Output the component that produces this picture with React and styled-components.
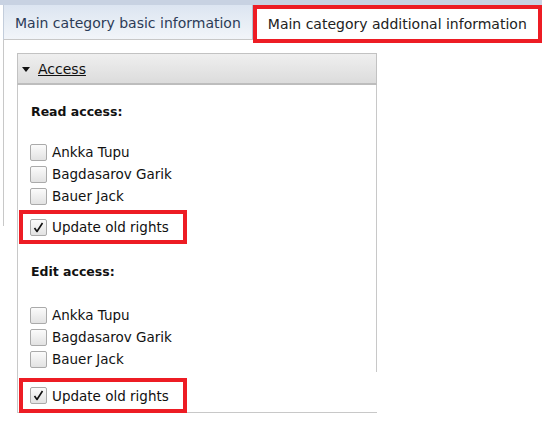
import React from "react";
import styled, { createGlobalStyle } from "styled-components";

const Global = createGlobalStyle`
  html, body { margin: 0; padding: 0; background: #ffffff; }
  body { font-family: "DejaVu Sans", Verdana, sans-serif; color: #1a1a1a; }
`;

const Page = styled.div`
  width: 542px;
  height: 421px;
  overflow: hidden;
  background: #fff;
`;

const TopBand = styled.div`
  height: 5px;
  background: #c8d2e2;
`;

const TabBar = styled.div`
  display: flex;
  align-items: flex-start;
  padding-left: 3px;
`;

const Tab = styled.div`
  box-sizing: border-box;
  display: flex;
  align-items: center;
  font-size: 14px;
  white-space: nowrap;
  ${(p) =>
    p.$active
      ? `
    height: 38px;
    margin-left: 0;
    padding: 0 11px 0 11px;
    background: #fff;
    color: #222;
    border: 4px solid #ed1c24;
  `
      : `
    height: 35px;
    padding: 1px 11px 0 11px;
    background: linear-gradient(#dce5f1, #f2f5f9);
    color: #2c3b57;
    border-left: 1px solid #c3cddb;
    border-right: 1px solid #b4bfce;
    border-bottom: 1px solid #c8c8c8;
  `}
`;

const TabContent = styled.div`
  margin-left: 3px;
  margin-top: -4px;
  height: 173px;
  border-left: 1px solid #c8c8c8;
  padding: 14px 0 0 13px;
`;

const Panel = styled.div`
  width: 360px;
`;

const PanelHeader = styled.div`
  box-sizing: border-box;
  height: 32px;
  display: flex;
  align-items: center;
  gap: 8px;
  padding-left: 4px;
  border: 1px solid #c2c2c2;
  border-bottom: 2px solid #bdbdbd;
  background: linear-gradient(#efefef, #dcdcdc);
  font-size: 14px;
  color: #111;
`;

const Caret = styled.span`
  width: 0;
  height: 0;
  margin-top: 1px;
  border-left: 4px solid transparent;
  border-right: 4px solid transparent;
  border-top: 5px solid #111;
`;

const HeaderLink = styled.span`
  text-decoration: underline;
`;

const PanelBody = styled.div`
  box-sizing: border-box;
  height: 328px;
  border-left: 1px solid #c8c8c8;
  border-bottom: 1px solid #c8c8c8;
  background: linear-gradient(#c8c8c8, #c8c8c8) right top / 1px 287px no-repeat;
  padding: 16px 0 0 0;
`;

const SectionTitle = styled.div`
  font-weight: bold;
  font-size: 12.5px;
  line-height: 16px;
  padding-left: 13px;
  margin-top: ${(p) => p.$mt}px;
  margin-bottom: ${(p) => p.$mb}px;
  color: #111;
`;

const Row = styled.label`
  display: flex;
  align-items: center;
  gap: 5px;
  height: 22px;
  padding-left: 12px;
  font-size: 13.5px;
  color: #111;
`;

const Highlight = styled.div`
  box-sizing: border-box;
  width: 168px;
  height: ${(p) => p.$h}px;
  margin-left: 1px;
  margin-top: ${(p) => p.$mt}px;
  border: 4px solid #ed1c24;
  display: flex;
  align-items: center;
  ${Row} {
    padding-left: 7px;
  }
`;

const Box = styled.span`
  box-sizing: border-box;
  width: 17px;
  height: 17px;
  border: 1px solid #aaaaaa;
  border-radius: 2px;
  background: linear-gradient(#fbfbfb, #e2e2e2);
  display: flex;
  align-items: center;
  justify-content: center;
  flex: none;
`;

function Check({ checked }) {
  return (
    <Box>
      {checked && (
        <svg width="11" height="11" viewBox="0 0 11 11">
          <path d="M1.5 6 L4 9.5 L9.5 1" fill="none" stroke="#111" strokeWidth="1.6" strokeLinejoin="round" />
        </svg>
      )}
    </Box>
  );
}

const users = ["Ankka Tupu", "Bagdasarov Garik", "Bauer Jack"];

function Section({ title, titleMt, titleMb, hlMt, hlH }) {
  return (
    <>
      <SectionTitle $mt={titleMt} $mb={titleMb}>{title}</SectionTitle>
      {users.map((u) => (
        <Row key={u}>
          <Check />
          {u}
        </Row>
      ))}
      <Highlight $mt={hlMt} $h={hlH}>
        <Row>
          <Check checked />
          Update old rights
        </Row>
      </Highlight>
    </>
  );
}

export default function App() {
  return (
    <Page>
      <Global />
      <TopBand />
      <TabBar>
        <Tab>Main category basic information</Tab>
        <Tab $active>Main category additional information</Tab>
      </TabBar>
      <TabContent>
        <Panel>
          <PanelHeader>
            <Caret />
            <HeaderLink>Access</HeaderLink>
          </PanelHeader>
          <PanelBody>
            <Section title="Read access:" titleMt={3} titleMb={21} hlMt={3} hlH={34} />
            <Section title="Edit access:" titleMt={20} titleMb={24} hlMt={8} hlH={35} />
          </PanelBody>
        </Panel>
      </TabContent>
    </Page>
  );
}
